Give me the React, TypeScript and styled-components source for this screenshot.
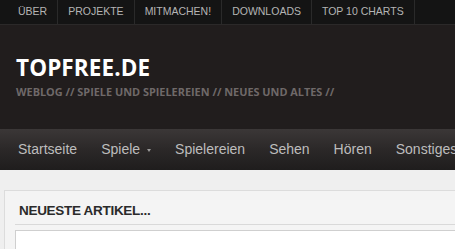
import styled, { createGlobalStyle } from 'styled-components';

const GlobalStyle = createGlobalStyle`
  html, body {
    margin: 0;
    padding: 0;
    background: #efefef;
    overflow: hidden;
  }
`;

const Page = styled.div`
  width: 455px;
  height: 249px;
  overflow: hidden;
  display: flex;
  flex-direction: column;
`;

const TopBar = styled.ul`
  display: flex;
  flex-shrink: 0;
  margin: 0;
  padding: 0 0 0 7px;
  list-style: none;
  height: 24px;
  background: #141414;
  border-bottom: 1px solid #2b2929;
`;

const TopItem = styled.li<{ $first?: boolean }>`
  display: flex;
  align-items: center;
  padding: 0 10px 2px ${p => (p.$first ? 11 : 10)}px;
  border-right: 1px solid #2a2a2a;
  font-family: "Liberation Sans", Arial, sans-serif;
  font-size: 10.5px;
  color: #b4b4b4;
  text-transform: uppercase;
  white-space: nowrap;
`;

const Header = styled.header`
  flex-shrink: 0;
  background: #211d1d;
  height: 104px;
  padding: 31px 16px 0;
  box-sizing: border-box;
`;

const SiteTitle = styled.h1`
  margin: 0;
  font-family: "Open Sans", sans-serif;
  font-weight: 700;
  font-size: 22.5px;
  line-height: 24px;
  color: #ffffff;
  letter-spacing: 0.1px;
`;

const Tagline = styled.div`
  margin-top: 5px;
  font-family: "Open Sans", sans-serif;
  font-weight: 700;
  font-size: 10.9px;
  line-height: 14px;
  color: #6f6969;
  white-space: nowrap;
`;

const NavBar = styled.nav`
  display: flex;
  flex-shrink: 0;
  height: 41px;
  padding: 0 6px;
  background: linear-gradient(to bottom, #3b3737 0%, #2b2828 50%, #1f1d1d 100%);
  white-space: nowrap;
  overflow: hidden;
`;

const NavItem = styled.div`
  display: flex;
  align-items: center;
  gap: 7px;
  padding: 0 12px 1px;
  font-family: "Liberation Sans", Arial, sans-serif;
  font-size: 14px;
  color: #bdbdbd;
`;

const Caret = styled.span`
  display: inline-block;
  width: 0;
  height: 0;
  margin-top: 2px;
  border-left: 2.5px solid transparent;
  border-right: 2.5px solid transparent;
  border-top: 3px solid #9a9a9a;
`;

const Content = styled.main`
  flex: 1;
  background: #efefef;
  padding: 20px 0 0 4px;
`;

const Box = styled.section`
  background: #f4f4f4;
  border: 1px solid #dcdcdc;
  border-right: none;
  height: 100%;
  box-sizing: border-box;
  padding: 0 0 0 10px;
`;

const BoxTitle = styled.h2`
  margin: 0;
  padding: 12px 0 0 4px;
  height: 34px;
  box-sizing: border-box;
  border-bottom: 1px solid #d9d9d9;
  font-family: "Liberation Sans", Arial, sans-serif;
  font-weight: 700;
  font-size: 13.5px;
  line-height: 16px;
  color: #2a2a2a;
  letter-spacing: -0.3px;
`;

const Inner = styled.div`
  margin-top: 5px;
  background: #ffffff;
  border: 1px solid #cfcfcf;
  border-right: none;
  height: 40px;
`;

const topLinks = ['Über', 'Projekte', 'Mitmachen!', 'Downloads', 'Top 10 Charts'];
const navLinks = [
  { label: 'Startseite' },
  { label: 'Spiele', dropdown: true },
  { label: 'Spielereien' },
  { label: 'Sehen' },
  { label: 'Hören' },
  { label: 'Sonstiges' },
];

export default function App() {
  return (
    <>
      <GlobalStyle />
      <Page>
        <TopBar>
          {topLinks.map((l, i) => (
            <TopItem key={l} $first={i === 0}>{l}</TopItem>
          ))}
        </TopBar>
        <Header>
          <SiteTitle>TOPFREE.DE</SiteTitle>
          <Tagline>WEBLOG // SPIELE UND SPIELEREIEN // NEUES UND ALTES //</Tagline>
        </Header>
        <NavBar>
          {navLinks.map(n => (
            <NavItem key={n.label}>
              {n.label}
              {n.dropdown && <Caret />}
            </NavItem>
          ))}
        </NavBar>
        <Content>
          <Box>
            <BoxTitle>NEUESTE ARTIKEL...</BoxTitle>
            <Inner />
          </Box>
        </Content>
      </Page>
    </>
  );
}
